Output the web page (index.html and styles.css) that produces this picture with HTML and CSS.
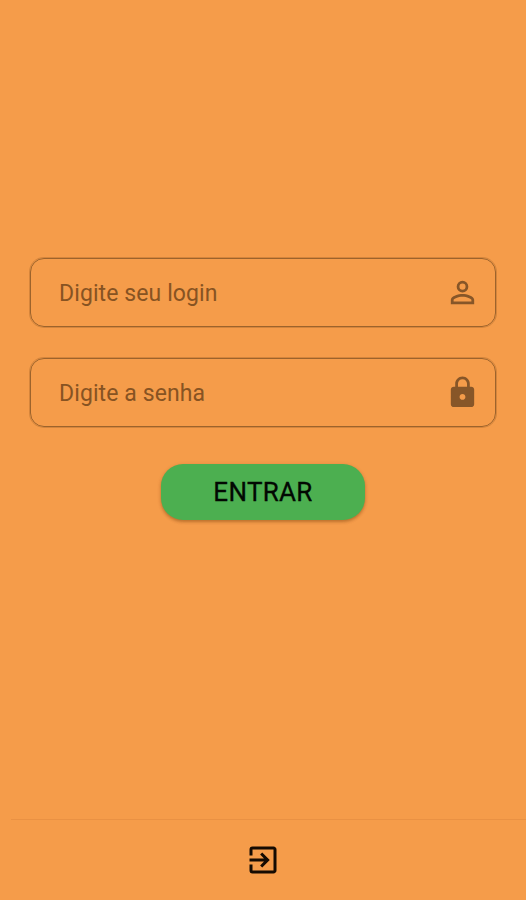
FILE: index.html
```html
<!DOCTYPE html>
<html lang="pt-BR">
<head>
<meta charset="utf-8">
<title>Login</title>
<link rel="stylesheet" href="styles.css">
</head>
<body>
<main class="screen">
  <form class="login">
    <div class="field">
      <span class="hint">Digite seu login</span>
      <svg class="icon" viewBox="0 0 24 24"><path d="M12 5.9a2.1 2.1 0 1 1 0 4.2 2.1 2.1 0 0 1 0-4.2m0 9c2.97 0 6.1 1.46 6.1 2.1v1.1H5.9V17c0-.64 3.13-2.1 6.1-2.1M12 4a4 4 0 1 0 0 8 4 4 0 0 0 0-8zm0 9c-2.67 0-8 1.34-8 4v3h16v-3c0-2.66-5.33-4-8-4z"/></svg>
    </div>
    <div class="field">
      <span class="hint">Digite a senha</span>
      <svg class="icon" viewBox="0 0 24 24"><path d="M18 8h-1V6c0-2.76-2.24-5-5-5S7 3.240 7 6v2H6c-1.1 0-2 .9-2 2v10c0 1.1.9 2 2 2h12c1.1 0 2-.9 2-2V10c0-1.100-.9-2-2-2zm-6 9c-1.1 0-2-.9-2-2s.9-2 2-2 2 .9 2 2-.9 2-2 2zm3.100-9H8.900V6c0-1.710 1.390-3.100 3.100-3.100s3.100 1.390 3.100 3.100v2z"/></svg>
    </div>
    <button class="submit" type="button">ENTRAR</button>
  </form>
  <footer class="bar">
    <svg class="exit" viewBox="0 0 24 24"><path d="M10.090 15.590 11.500 17l5-5-5-5-1.410 1.410L12.670 11H3v2h9.670l-2.580 2.590zM19 3H5a2 2 0 0 0-2 2v4h2V5h14v14H5v-4H3v4a2 2 0 0 0 2 2h14c1.100 0 2-.9 2-2V5c0-1.100-.9-2-2-2z"/></svg>
  </footer>
</main>
</body>
</html>
```
FILE: styles.css
```css
* {
  box-sizing: border-box;
}

body {
  margin: 0;
  background: #f59c4a;
  font-family: Roboto, "Liberation Sans", sans-serif;
}

.screen {
  display: flex;
  flex-direction: column;
  height: 900px;
}

.login {
  flex: 1;
  display: flex;
  flex-direction: column;
  align-items: center;
  padding: 258px 29px 0;
}

.field {
  display: flex;
  align-items: center;
  justify-content: space-between;
  width: 466px;
  height: 69px;
  margin-bottom: 31px;
  padding: 0 15.500px 0 28px;
  border: 1px solid #9c632c;
  border-radius: 14px;
  box-shadow: 0 0 0 1px rgba(100, 55, 15, 0.22);
}

.hint {
  padding-top: 2px;
  color: #875322;
  font-size: 23px;
  line-height: 30px;
  letter-spacing: 0.1px;
}

.icon {
  width: 35px;
  height: 35px;
  fill: #875628;
}

.submit {
  width: 204px;
  height: 56px;
  margin-top: 6px;
  margin-top: 6px;
  padding: 0;
  border: 0;
  border-radius: 22px;
  background: #4caf50;
  box-shadow: 0 2px 3px rgba(100, 50, 0, 0.3), 0 1px 4px rgba(100, 50, 0, 0.15);
  color: #020802;
  font: 400 26px/56px Roboto, "Liberation Sans", sans-serif;
  letter-spacing: 0.3px;
  -webkit-text-stroke: 0.3px #020802;
}

.bar {
  display: flex;
  align-items: center;
  justify-content: center;
  height: 81px;
  margin-left: 11px;
  padding-right: 11px;
  border-top: 1px solid #e99143;
}

.exit {
  width: 36px;
  height: 36px;
  fill: #150b02;
}
```
